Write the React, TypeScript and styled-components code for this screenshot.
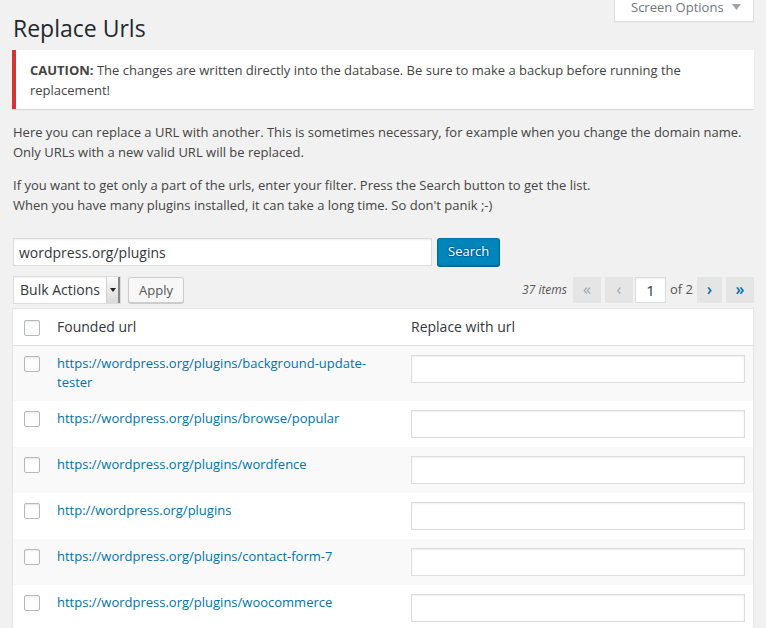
import React from "react";
import styled, { createGlobalStyle } from "styled-components";

const Global = createGlobalStyle`
  html, body { margin: 0; padding: 0; background: #f1f1f1; }
  body {
    font-family: "Open Sans", "Noto Sans", sans-serif;
    font-size: 13px;
    line-height: 1.5;
    color: #444;
  }
  * { box-sizing: border-box; }
`;

const Wrap = styled.div`
  padding: 0 12px;
`;

const Header = styled.div`
  display: flex;
  align-items: flex-start;
  justify-content: space-between;
`;

const Title = styled.h1`
  margin: 0;
  padding: 14px 0 3px 1px;
  font-size: 23px;
  font-weight: 400;
  line-height: 29px;
  color: #23282d;
`;

const ScreenOptions = styled.div`
  display: flex;
  align-items: center;
  gap: 8px;
  width: 140px;
  height: 22px;
  padding: 0 0 6px 16px;
  background: #fff;
  border: 1px solid #ddd;
  border-top: none;
  box-shadow: 0 1px 1px -1px rgba(0, 0, 0, 0.1);
  color: #72777c;
  font-size: 13px;
  line-height: 15px;
`;

const Notice = styled.div`
  margin: 4px 0 13px;
  padding: 1px 12px;
  background: #fff;
  border-left: 4px solid #dc3232;
  box-shadow: 0 1px 1px 0 rgba(0, 0, 0, 0.1);
  p {
    margin: 7px 0 6px;
    padding: 2px 2px;
    line-height: 20px;
  }
  strong { font-weight: 700; }
`;

const Para = styled.p`
  margin: 13px 0;
  padding-left: 1px;
  line-height: 20px;
`;

const SearchRow = styled.div`
  display: flex;
  align-items: center;
  gap: 5px;
  margin-top: 23px;
  padding-left: 1px;
`;

const TextInput = styled.input`
  height: 28px;
  padding: 3px 5px;
  border: 1px solid #ddd;
  box-shadow: inset 0 1px 2px rgba(0, 0, 0, 0.07);
  background: #fff;
  color: #32373c;
  font-family: inherit;
  font-size: 14px;
  outline: none;
  border-radius: 0;
`;

const SearchInput = styled(TextInput)`
  width: 419px;
`;

const PrimaryButton = styled.button`
  height: 28px;
  padding: 0 10px 1px;
  background: #0085ba;
  border: 1px solid #0073aa;
  border-color: #0073aa #006799 #006799;
  border-radius: 3px;
  box-shadow: 0 1px 0 #006799;
  color: #fff;
  font-family: inherit;
  font-size: 13px;
  text-shadow: 0 -1px 1px #006799, 1px 0 1px #006799, 0 1px 1px #006799, -1px 0 1px #006799;
  margin-top: -1px;
`;

const TableNav = styled.div`
  display: flex;
  align-items: center;
  justify-content: space-between;
  margin: 10px 0 4px;
  padding-left: 1px;
  height: 28px;
`;

const BulkGroup = styled.div`
  display: flex;
  align-items: center;
  gap: 7px;
`;

const SelectBox = styled.div`
  display: flex;
  width: 108px;
  height: 28px;
  background: #fff;
  border: 1px solid #ddd;
  box-shadow: inset 0 1px 2px rgba(0, 0, 0, 0.07);
  color: #32373c;
  font-size: 14px;
`;

const SelectLabel = styled.span`
  flex: 1;
  padding: 0 0 0 6px;
  line-height: 25px;
`;

const SelectArrow = styled.span`
  width: 14px;
  display: flex;
  align-items: center;
  justify-content: center;
  background: linear-gradient(#fafafa, #d9d9d9);
  border-left: 1px solid #cfcfcf;
  border-right: 2px solid #888;
`;

const Button = styled.button`
  height: 26px;
  padding: 0 10px 1px;
  background: #f7f7f7;
  border: 1px solid #ccc;
  border-radius: 3px;
  box-shadow: 0 1px 0 #ccc;
  color: #555;
  font-family: inherit;
  font-size: 13px;
`;

const Pages = styled.div`
  display: flex;
  align-items: center;
  gap: 4px;
  color: #555;
`;

const ItemCount = styled.span`
  font-style: italic;
  font-size: 12px;
  margin-right: 2px;
`;

const PageBtn = styled.span<{ $on?: boolean; $w?: number }>`
  display: flex;
  align-items: center;
  justify-content: center;
  width: ${(p) => p.$w ?? 28}px;
  height: 26px;
  padding-bottom: 3px;
  background: #e5e5e5;
  color: ${(p) => (p.$on ? "#0073aa" : "#a0a5aa")};
  font-size: 16px;
  font-weight: ${(p) => (p.$on ? 600 : 400)};
  line-height: 1;
`;

const PageInput = styled(TextInput)`
  width: 31px;
  height: 26px;
  margin-left: -2px;
  padding: 0;
  text-align: center;
  font-size: 15px;
`;

const Table = styled.div`
  background: #fff;
  border: 1px solid #e5e5e5;
  box-shadow: 0 1px 1px rgba(0, 0, 0, 0.04);
`;

const Row = styled.div<{ $alt?: boolean; $head?: boolean }>`
  display: grid;
  grid-template-columns: 34px 354px 1fr;
  align-items: start;
  background: ${(p) => (p.$alt ? "#f9f9f9" : "#fff")};
  border-bottom: ${(p) => (p.$head ? "1px solid #e1e1e1" : "none")};
`;

const CheckCell = styled.div<{ $head?: boolean }>`
  padding: ${(p) => (p.$head ? "11px 0 0 11px" : "10px 0 0 11px")};
`;

const Check = styled.input.attrs({ type: "checkbox" })`
  appearance: none;
  display: block;
  margin: 0;
  width: 16px;
  height: 16px;
  border: 1px solid #b4b9be;
  border-radius: 2px;
  background: #fff;
  box-shadow: inset 0 1px 2px rgba(0, 0, 0, 0.1);
`;

const HeadCell = styled.div`
  padding: 8px 10px;
  font-size: 14px;
  line-height: 19.6px;
  color: #32373c;
`;

const Cell = styled.div`
  padding: 8px 8px 8px 10px;
  line-height: 19.5px;
`;

const Link = styled.a`
  color: #0073aa;
  text-decoration: none;
`;

const RowInput = styled(TextInput)`
  display: block;
  width: 100%;
  margin: 1px 0;
`;

const urls = [
  "https://wordpress.org/plugins/background-update-tester",
  "https://wordpress.org/plugins/browse/popular",
  "https://wordpress.org/plugins/wordfence",
  "http://wordpress.org/plugins",
  "https://wordpress.org/plugins/contact-form-7",
  "https://wordpress.org/plugins/woocommerce",
];

export default function App() {
  return (
    <>
      <Global />
      <Wrap>
        <Header>
          <Title>Replace Urls</Title>
          <ScreenOptions>
            Screen Options
            <svg width="9" height="7" viewBox="0 0 9 7">
              <path d="M0 0h9L4.5 6z" fill="#a0a5aa" />
            </svg>
          </ScreenOptions>
        </Header>
        <Notice>
          <p>
            <strong>CAUTION:</strong> The changes are written directly into the database. Be sure to make a backup
            before running the replacement!
          </p>
        </Notice>
        <Para>
          Here you can replace a URL with another. This is sometimes necessary, for example when you change the domain
          name.
          <br />
          Only URLs with a new valid URL will be replaced.
        </Para>
        <Para>
          If you want to get only a part of the urls, enter your filter. Press the Search button to get the list.
          <br />
          When you have many plugins installed, it can take a long time. So don't panik ;-)
        </Para>
        <SearchRow>
          <SearchInput defaultValue="wordpress.org/plugins" />
          <PrimaryButton>Search</PrimaryButton>
        </SearchRow>
        <TableNav>
          <BulkGroup>
            <SelectBox>
              <SelectLabel>Bulk Actions</SelectLabel>
              <SelectArrow>
                <svg width="6" height="4" viewBox="0 0 6 4">
                  <path d="M0 0h6L3 4z" fill="#222" />
                </svg>
              </SelectArrow>
            </SelectBox>
            <Button>Apply</Button>
          </BulkGroup>
          <Pages>
            <ItemCount>37 items</ItemCount>
            <PageBtn>«</PageBtn>
            <PageBtn>‹</PageBtn>
            <PageInput defaultValue="1" />
            <span>of 2</span>
            <PageBtn $on $w={25}>›</PageBtn>
            <PageBtn $on>»</PageBtn>
          </Pages>
        </TableNav>
        <Table>
          <Row $head>
            <CheckCell $head>
              <Check />
            </CheckCell>
            <HeadCell>Founded url</HeadCell>
            <HeadCell>Replace with url</HeadCell>
          </Row>
          {urls.map((u, i) => (
            <Row key={u} $alt={i % 2 === 0}>
              <CheckCell>
                <Check />
              </CheckCell>
              <Cell>
                <Link href="#">{u}</Link>
              </Cell>
              <Cell>
                <RowInput />
              </Cell>
            </Row>
          ))}
        </Table>
      </Wrap>
    </>
  );
}
